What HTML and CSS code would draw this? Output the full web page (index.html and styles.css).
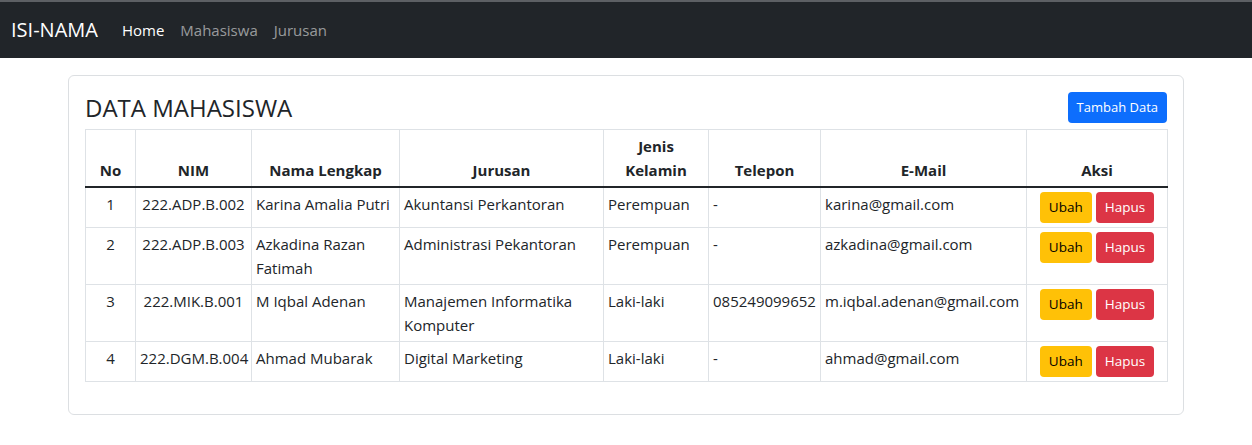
FILE: index.html
```html
<!DOCTYPE html>
<html lang="id">
<head>
<meta charset="utf-8">
<title>Data Mahasiswa</title>
<link rel="stylesheet" href="styles.css">
</head>
<body>
<nav class="navbar">
  <div class="nav-inner">
    <a class="brand" href="#">ISI-NAMA</a>
    <ul class="nav-links">
      <li><a class="nav-link active" href="#">Home</a></li>
      <li><a class="nav-link" href="#">Mahasiswa</a></li>
      <li><a class="nav-link" href="#">Jurusan</a></li>
    </ul>
  </div>
</nav>
<main class="container">
  <section class="card">
    <div class="card-head">
      <h4 class="card-title">DATA MAHASISWA</h4>
      <a class="btn btn-sm btn-primary" href="#">Tambah Data</a>
    </div>
    <table class="table">
      <colgroup>
        <col class="c-no"><col class="c-nim"><col class="c-nama"><col class="c-jur">
        <col class="c-jk"><col class="c-tel"><col class="c-mail"><col class="c-aksi">
      </colgroup>
      <thead>
        <tr>
          <th>No</th><th>NIM</th><th>Nama Lengkap</th><th>Jurusan</th>
          <th>Jenis Kelamin</th><th>Telepon</th><th>E-Mail</th><th>Aksi</th>
        </tr>
      </thead>
      <tbody>
        <tr>
          <td class="center">1</td><td class="center">222.ADP.B.002</td><td>Karina Amalia Putri</td>
          <td>Akuntansi Perkantoran</td><td>Perempuan</td><td>-</td><td>karina@gmail.com</td>
          <td class="aksi"><a class="btn btn-sm btn-warning" href="#">Ubah</a> <a class="btn btn-sm btn-danger" href="#">Hapus</a></td>
        </tr>
        <tr>
          <td class="center">2</td><td class="center">222.ADP.B.003</td><td>Azkadina Razan Fatimah</td>
          <td>Administrasi Pekantoran</td><td>Perempuan</td><td>-</td><td>azkadina@gmail.com</td>
          <td class="aksi"><a class="btn btn-sm btn-warning" href="#">Ubah</a> <a class="btn btn-sm btn-danger" href="#">Hapus</a></td>
        </tr>
        <tr>
          <td class="center">3</td><td class="center">222.MIK.B.001</td><td>M Iqbal Adenan</td>
          <td>Manajemen Informatika Komputer</td><td>Laki-laki</td><td>085249099652</td><td>m.iqbal.adenan@gmail.com</td>
          <td class="aksi"><a class="btn btn-sm btn-warning" href="#">Ubah</a> <a class="btn btn-sm btn-danger" href="#">Hapus</a></td>
        </tr>
        <tr>
          <td class="center">4</td><td class="center">222.DGM.B.004</td><td>Ahmad Mubarak</td>
          <td>Digital Marketing</td><td>Laki-laki</td><td>-</td><td>ahmad@gmail.com</td>
          <td class="aksi"><a class="btn btn-sm btn-warning" href="#">Ubah</a> <a class="btn btn-sm btn-danger" href="#">Hapus</a></td>
        </tr>
      </tbody>
    </table>
  </section>
</main>
</body>
</html>
```
FILE: styles.css
```css
* { box-sizing: border-box; }

body {
  margin: 0;
  font-family: "Open Sans", "Noto Sans", sans-serif;
  font-size: 15px;
  line-height: 24px;
  color: #212529;
  background: #fff;
}

a { text-decoration: none; }

.navbar {
  background: #212529;
  border-top: 2px solid #5d6064;
  height: 58px;
}

.nav-inner {
  display: flex;
  align-items: center;
  height: 56px;
  padding: 0 11px;
}

.brand {
  color: #fff;
  font-size: 20px;
  line-height: 30px;
  margin-right: 16px;
  padding: 5px 0;
}

.nav-links {
  display: flex;
  list-style: none;
  margin: 0;
  padding: 0;
}

.nav-link {
  display: block;
  padding: 8px 8px;
  color: rgba(255, 255, 255, 0.55);
  font-size: 15px;
  line-height: 24px;
}

.nav-link.active { color: #fff; }

.container {
  max-width: 1140px;
  margin: 17px auto 0;
  padding: 0 12px;
}

.card {
  border: 1px solid #dcdfe2;
  border-radius: 6px;
  padding: 16px;
}

.card-head {
  display: flex;
  align-items: center;
  justify-content: space-between;
  margin-bottom: 6px;
}

.card-title {
  margin: 0;
  font-size: 24px;
  font-weight: 500;
  line-height: 29px;
}

.btn {
  display: inline-block;
  border: 1px solid transparent;
  border-radius: 4px;
  vertical-align: top;
}

.btn-sm {
  font-size: 13.5px;
  line-height: 21px;
  padding: 4px 8px;
}

.btn-primary { background: #0d6efd; color: #fff; font-size: 13px; }
.btn-warning { background: #ffc107; color: #000; }
.btn-danger { background: #dc3545; color: #fff; }

.table {
  width: 100%;
  table-layout: fixed;
  border-collapse: collapse;
  margin-bottom: 16px;
}

.c-no { width: 50px; }
.c-nim { width: 116px; }
.c-nama { width: 148px; }
.c-jur { width: 204px; }
.c-jk { width: 105px; }
.c-tel { width: 112px; }
.c-mail { width: 206px; }
.c-aksi { width: 141px; }

.table th,
.table td {
  border: 1px solid #dee2e6;
  padding: 4px 4px;
  vertical-align: top;
  text-align: left;
}

.table thead th {
  vertical-align: bottom;
  text-align: center;
  font-weight: 700;
  border-bottom: 2px solid #212529;
}

.table td.center { text-align: center; }

.table td.aksi {
  text-align: center;
  white-space: nowrap;
  font-size: 0;
}

.aksi .btn + .btn { margin-left: 4px; }
```
